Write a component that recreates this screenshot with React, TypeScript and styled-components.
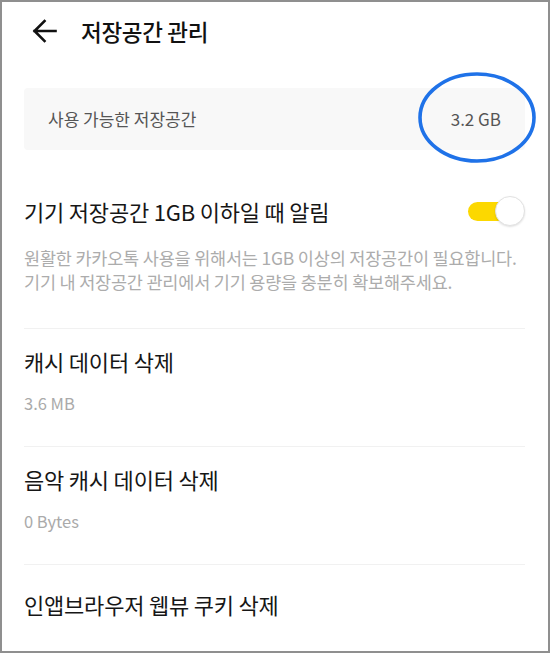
import React from "react";
import styled, { createGlobalStyle } from "styled-components";

const GlobalStyle = createGlobalStyle`
  html, body { margin: 0; padding: 0; background: #ffffff; }
  body { font-family: "Noto Sans CJK KR", "Noto Sans", sans-serif; }
  * { box-sizing: border-box; }
`;

const Frame = styled.div`
  width: 550px;
  height: 653px;
  border: 2px solid #8f8f8f;
  background: #ffffff;
  padding: 0 23px 0 22px;
  display: flex;
  flex-direction: column;
  overflow: hidden;
  font-family: "Noto Sans CJK KR", "Noto Sans", sans-serif;
`;

const Header = styled.header`
  height: 62px;
  display: flex;
  align-items: center;
  gap: 24px;
  padding-left: 8px;
`;

const BackButton = styled.button`
  border: 0;
  background: none;
  padding: 0;
  width: 25px;
  height: 24px;
  display: flex;
  align-items: center;
  justify-content: center;
  cursor: pointer;
`;

const Title = styled.h1`
  margin: 0;
  font-size: 22.5px;
  font-weight: 500;
  color: #111111;
  letter-spacing: -0.3px;
  line-height: 28px;
`;

const StorageCard = styled.div`
  position: relative;
  margin-top: 27px;
  height: 66px;
  border-radius: 4px;
  background: #f8f8f8;
  padding: 0 24px;
  display: flex;
  align-items: center;
  justify-content: space-between;
`;

const CardLabel = styled.span`
  font-size: 17px;
  color: #555555;
  line-height: 22px;
`;

const CardValue = styled.span`
  font-size: 17px;
  color: #555555;
  line-height: 22px;
`;

const Highlight = styled.svg`
  position: absolute;
  left: 394px;
  top: -16px;
  width: 118px;
  height: 91px;
  overflow: visible;
  pointer-events: none;
`;

const ToggleSection = styled.section`
  padding: 46px 0 34px;
`;

const ToggleRow = styled.div`
  display: flex;
  align-items: center;
  justify-content: space-between;
`;

const ItemTitle = styled.div`
  font-size: 22px;
  line-height: 28px;
  color: #161616;
  letter-spacing: -0.2px;
`;

const Description = styled.p`
  margin: 20px 0 0;
  font-size: 17.5px;
  line-height: 24px;
  color: #acacac;
  letter-spacing: -0.2px;
  white-space: nowrap;
`;

const Switch = styled.div`
  position: relative;
  width: 57px;
  height: 30px;
  flex: none;
`;

const SwitchTrack = styled.div`
  position: absolute;
  left: 0;
  top: 6px;
  width: 44px;
  height: 19px;
  border-radius: 10px;
  background: #fcd800;
`;

const SwitchKnob = styled.div`
  position: absolute;
  right: 0;
  top: 0;
  width: 30px;
  height: 30px;
  border-radius: 50%;
  background: #ffffff;
  border: 1px solid #e2e2e2;
  box-shadow: 0 1px 2px rgba(0, 0, 0, 0.12);
`;

const Item = styled.div<{ $top?: number }>`
  border-top: 1px solid #f1f1f1;
  padding: ${(p) => p.$top ?? 18}px 0 33px;
`;

const ItemSub = styled.div`
  margin-top: 18px;
  font-size: 16.5px;
  line-height: 20px;
  color: #aaaaaa;
`;

export default function App() {
  return (
    <>
      <GlobalStyle />
      <Frame>
        <Header>
          <BackButton aria-label="뒤로">
            <svg width="25" height="24" viewBox="0 0 25 24" fill="none">
              <path
                d="M23.5 12H2.5M12.5 2L2.5 12L12.5 22"
                stroke="#111"
                strokeWidth="2.6"
                strokeLinecap="square"
                strokeLinejoin="miter"
              />
            </svg>
          </BackButton>
          <Title>저장공간 관리</Title>
        </Header>

        <StorageCard>
          <CardLabel>사용 가능한 저장공간</CardLabel>
          <CardValue>3.2 GB</CardValue>
          <Highlight viewBox="0 0 118 91">
            <ellipse cx="59" cy="45.5" rx="57" ry="43.5" fill="none" stroke="#1f72e8" strokeWidth="3.6" />
          </Highlight>
        </StorageCard>

        <ToggleSection>
          <ToggleRow>
            <ItemTitle>기기 저장공간 1GB 이하일 때 알림</ItemTitle>
            <Switch>
              <SwitchTrack />
              <SwitchKnob />
            </Switch>
          </ToggleRow>
          <Description>
            원활한 카카오톡 사용을 위해서는 1GB 이상의 저장공간이 필요합니다.
            <br />
            기기 내 저장공간 관리에서 기기 용량을 충분히 확보해주세요.
          </Description>
        </ToggleSection>

        <Item>
          <ItemTitle>캐시 데이터 삭제</ItemTitle>
          <ItemSub>3.6 MB</ItemSub>
        </Item>
        <Item>
          <ItemTitle>음악 캐시 데이터 삭제</ItemTitle>
          <ItemSub>0 Bytes</ItemSub>
        </Item>
        <Item $top={25}>
          <ItemTitle>인앱브라우저 웹뷰 쿠키 삭제</ItemTitle>
        </Item>
      </Frame>
    </>
  );
}
